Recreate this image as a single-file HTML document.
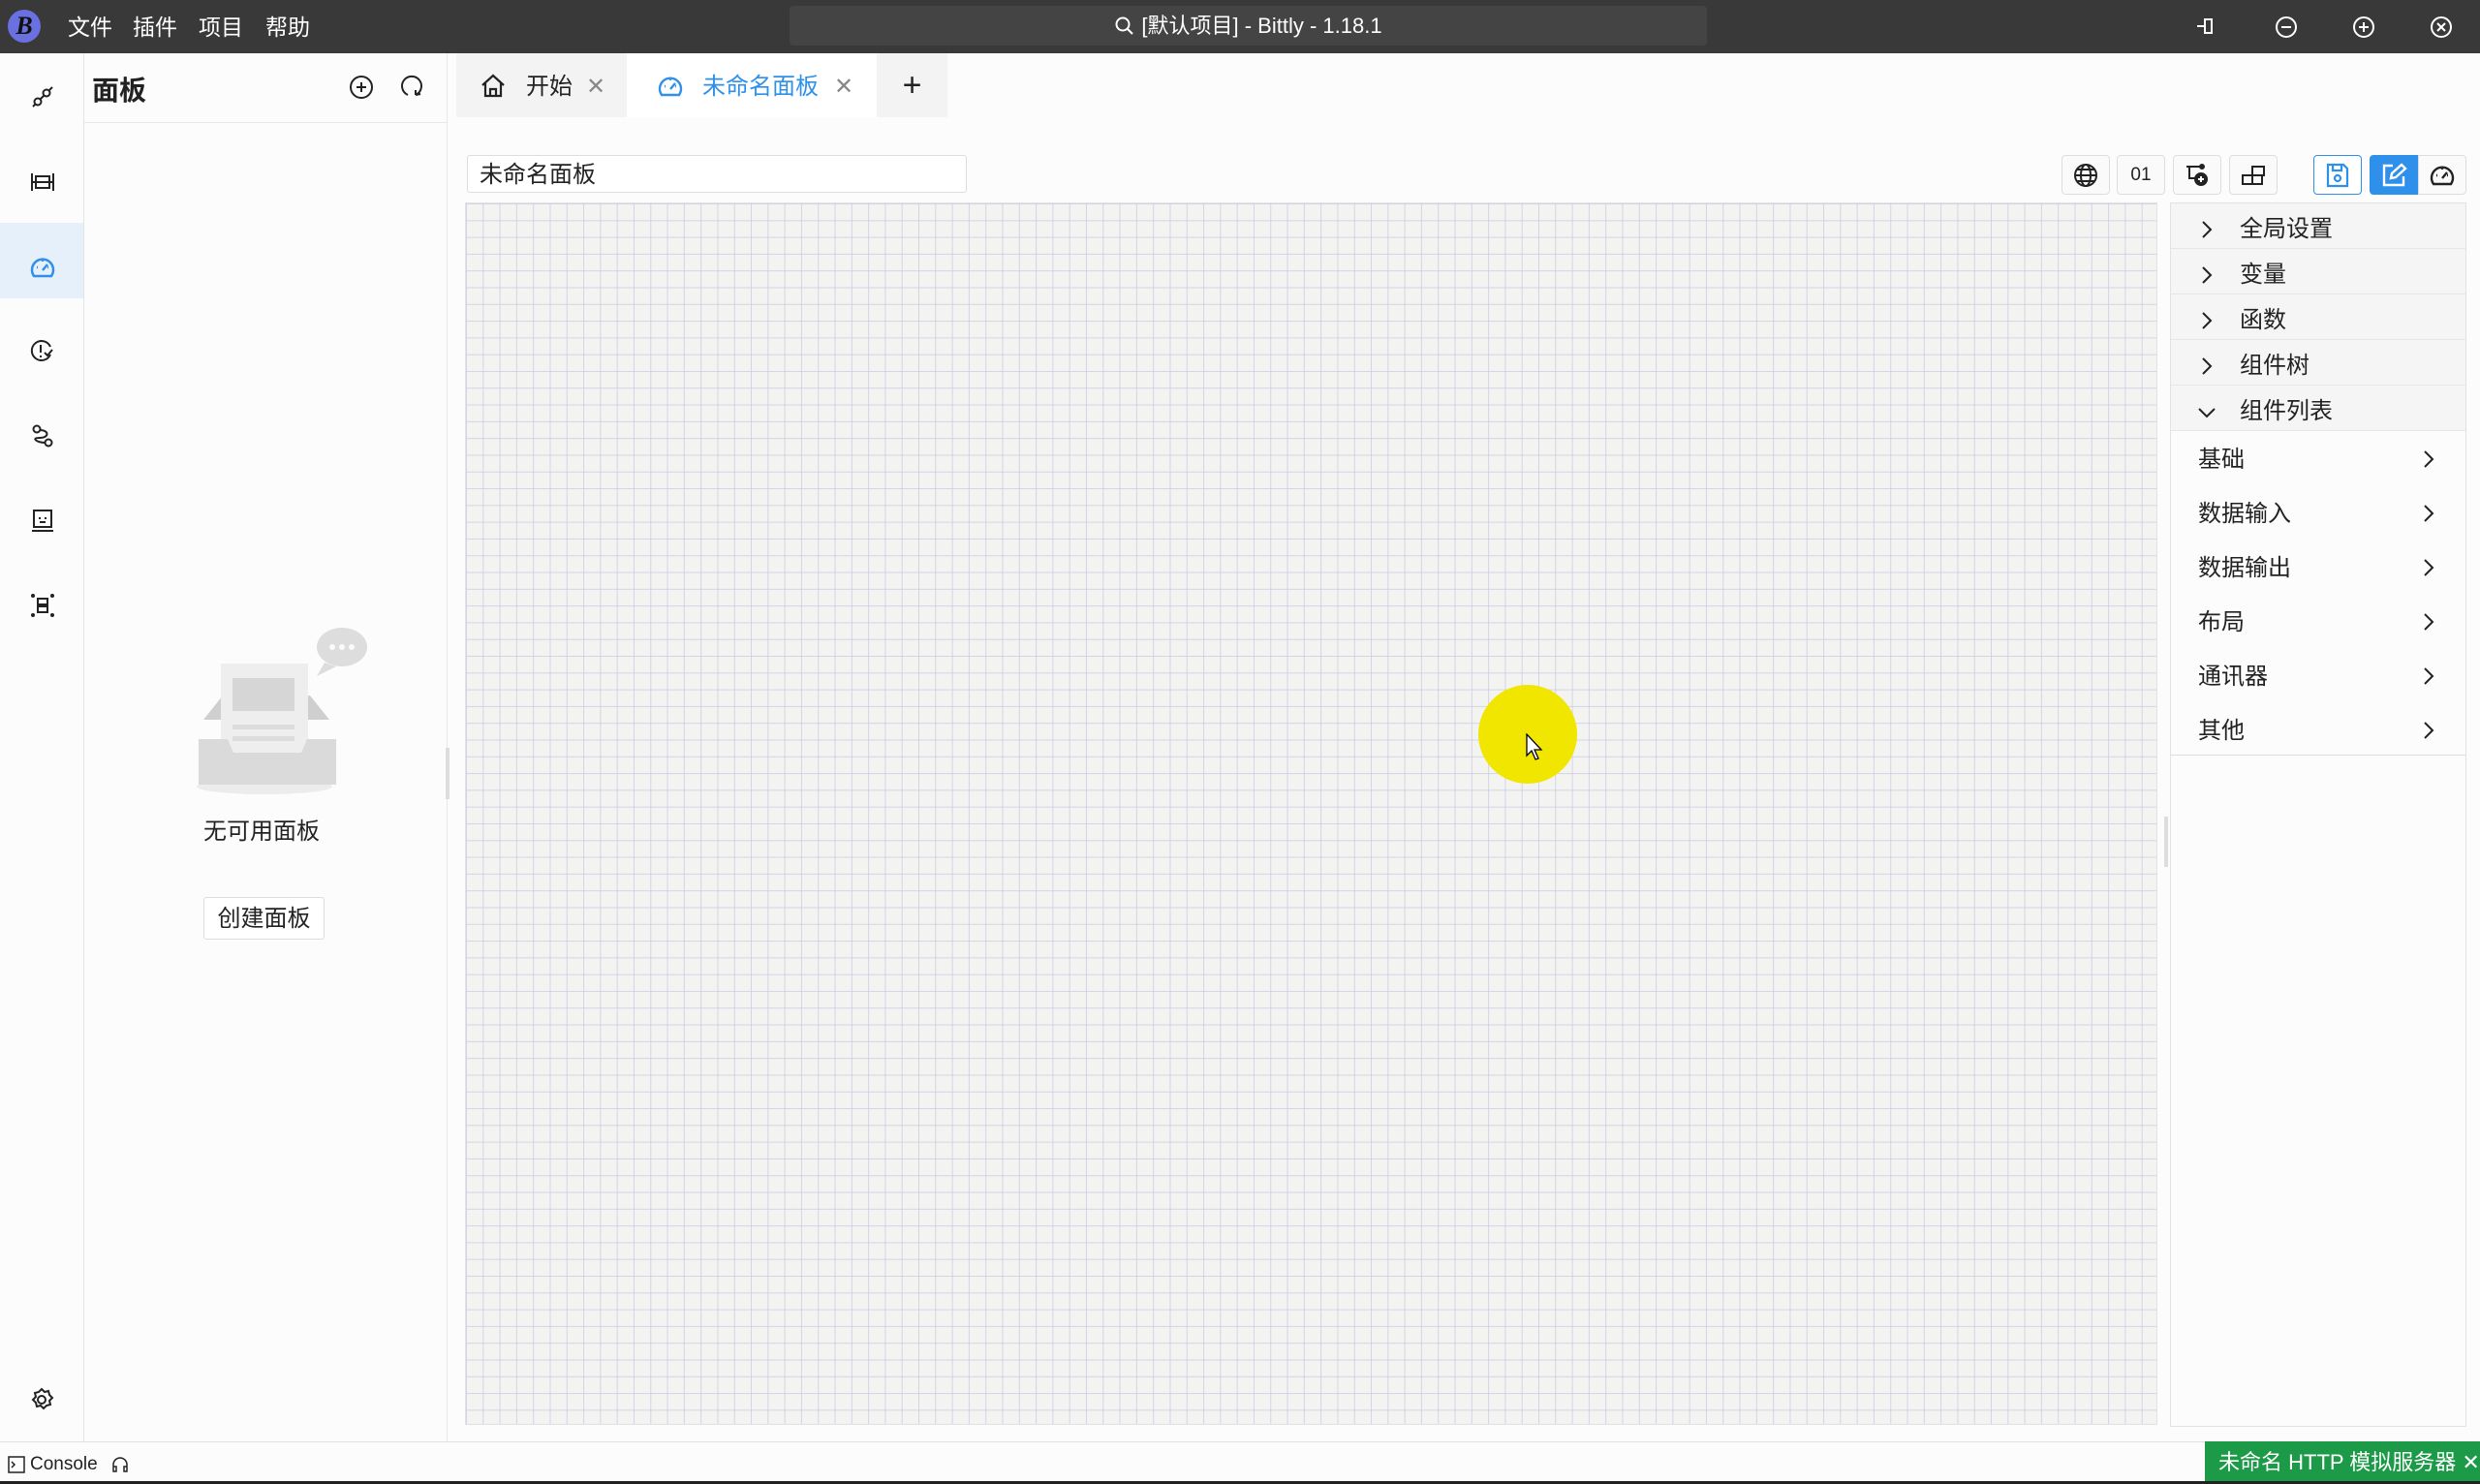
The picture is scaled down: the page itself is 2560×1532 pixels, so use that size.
<!DOCTYPE html>
<html><head><meta charset="utf-8"><style>
*{box-sizing:border-box;margin:0;padding:0}
body{width:2560px;height:1532px;overflow:hidden;background:#fcfcfc;font-family:"Liberation Sans","Noto Sans CJK SC",sans-serif;color:#222;position:relative}
.abs{position:absolute}
.title{left:0;top:0;width:2560px;height:55px;background:#393939}
.menu{top:9px;font-size:23px;color:#fff}
.search{left:815px;top:6px;width:947px;height:41px;background:#444;border-radius:4px;color:#fff;font-size:22px;text-align:center;line-height:41px}
.act{left:0;top:55px;width:87px;height:1433px;background:#fcfcfc;border-right:1px solid #e4e4e4}
.side{left:87px;top:55px;width:375px;height:1433px;background:#fcfcfc;border-right:1px solid #e8e8e8}
.tabbar{left:462px;top:55px;width:2098px;height:66px;background:#fcfcfc}
.tab{top:55px;height:66px;background:#f3f3f3;font-size:24px;line-height:66px}
.canvas{left:480px;top:209px;width:1747px;height:1262px;background-color:#f3f3f1;background-image:linear-gradient(to right,rgba(200,202,225,.75) 1px,transparent 1px),linear-gradient(to bottom,rgba(200,202,225,.75) 1px,transparent 1px);background-size:17.3px 17.3px;border:1px solid #e2e2e2}
.tb{top:160px;width:50px;height:41px;border:1px solid #ddd;border-radius:4px;background:#fafafa;display:flex;align-items:center;justify-content:center;font-size:19px}
.rp{left:2240px;top:209px;width:306px;height:1264px;border:1px solid #e2e2e2;background:#fcfcfc}
.ah{position:absolute;left:0;width:304px;height:47px;background:#f5f5f5;border-bottom:1px solid #e6e6e6;font-size:24px;line-height:46px;padding-left:71px;padding-top:4px}
.ah svg{position:absolute;left:30px;top:17px}
.li{position:absolute;left:28px;width:245px;font-size:24px;height:40px;line-height:40px}
.li svg{position:absolute;right:0;top:9px}
.status{left:0;top:1488px;width:2560px;height:41px;background:#fcfcfc;border-top:1px solid #e0e0e0}
</style></head><body>
<div class="abs title"></div>
<div class="abs" style="left:8px;top:10px;width:34px;height:34px;border-radius:50%;background:#6b70e0;color:#111;font:italic bold 26px 'Liberation Serif',serif;text-align:center;line-height:34px">B</div>
<div class="abs menu" style="left:70px">文件</div>
<div class="abs menu" style="left:137px">插件</div>
<div class="abs menu" style="left:205px">项目</div>
<div class="abs menu" style="left:274px">帮助</div>
<div class="abs search"><svg width="22" height="22" viewBox="0 0 22 22" style="vertical-align:-4px;margin-right:6px"><circle cx="9" cy="9" r="6.5" stroke="#fff" stroke-width="2" fill="none"/><path d="M14 14l5 5" stroke="#fff" stroke-width="2"/></svg>[默认项目] - Bittly - 1.18.1</div>
<svg class="abs" style="left:2266px;top:16px" width="24" height="22" viewBox="0 0 24 22"><path d="M2 11h8M10 4h7v14h-7z" stroke="#fff" stroke-width="2" fill="none"/></svg>
<svg class="abs" style="left:2347px;top:15px" width="26" height="26"><circle cx="13" cy="13" r="10" stroke="#fff" stroke-width="2" fill="none"/><path d="M8 13h10" stroke="#fff" stroke-width="2"/></svg>
<svg class="abs" style="left:2427px;top:15px" width="26" height="26"><circle cx="13" cy="13" r="10" stroke="#fff" stroke-width="2" fill="none"/><path d="M8 13h10M13 8v10" stroke="#fff" stroke-width="2"/></svg>
<svg class="abs" style="left:2507px;top:15px" width="26" height="26"><circle cx="13" cy="13" r="10" stroke="#fff" stroke-width="2" fill="none"/><path d="M9 9l8 8M17 9l-8 8" stroke="#fff" stroke-width="2"/></svg>

<div class="abs act"></div>
<div class="abs" style="left:0;top:230px;width:86px;height:78px;background:#e6f0fb"></div>
<svg class="abs" style="left:32px;top:88px" width="24" height="24" viewBox="0 0 24 24" fill="none" stroke="#222" stroke-width="2"><circle cx="7" cy="17" r="3.5"/><circle cx="16" cy="8" r="3.5"/><path d="M9.5 14.5l4-4M2 22l3-3M19 5l3-3"/></svg>
<svg class="abs" style="left:31px;top:177px" width="26" height="22" viewBox="0 0 26 22" fill="none" stroke="#222" stroke-width="2"><path d="M2 2v18M24 2v18M2 11h22M6 5h14v12H6z"/></svg>
<svg class="abs" style="left:30px;top:262px" width="28" height="28" viewBox="0 0 28 28" fill="none" stroke="#2e90ea" stroke-width="2.5"><path d="M5 23a11 11 0 1 1 18 0z"/><path d="M14 17l5-6M8 14h1M14 7v1M20 14h-1"/></svg>
<svg class="abs" style="left:30px;top:349px" width="26" height="26" viewBox="0 0 26 26" fill="none" stroke="#222" stroke-width="2"><path d="M22 9A10 10 0 1 0 22 17"/><path d="M12 7v8M12 18v2M16 15l3 3 5-6"/></svg>
<svg class="abs" style="left:32px;top:437px" width="24" height="26" viewBox="0 0 24 26" fill="none" stroke="#222" stroke-width="2"><circle cx="6" cy="6" r="3.5"/><circle cx="18" cy="20" r="3.5"/><path d="M9 7c10 0 10 8 0 8s-2 5 5 5"/></svg>
<svg class="abs" style="left:31px;top:524px" width="26" height="26" viewBox="0 0 26 26" fill="none" stroke="#222" stroke-width="2"><path d="M4 3h18v17H4zM2 24h22M9 11h2M15 11h2M10 15h6"/></svg>
<svg class="abs" style="left:31px;top:612px" width="26" height="26" viewBox="0 0 26 26" fill="none" stroke="#222" stroke-width="2"><path d="M8 6h10v6H8zM8 14h10v6H8z"/><circle cx="3" cy="3" r="1" fill="#222"/><circle cx="23" cy="3" r="1" fill="#222"/><circle cx="3" cy="23" r="1" fill="#222"/><circle cx="23" cy="23" r="1" fill="#222"/></svg>
<svg class="abs" style="left:30px;top:1432px" width="26" height="26" viewBox="0 0 26 26" fill="none" stroke="#222" stroke-width="2"><circle cx="13" cy="13" r="4"/><path d="M13 2l3 3 4-1 1 4 3 3-3 3 1 4-4 1-3 3-3-3-4 1-1-4-3-3 3-3-1-4 4-1z"/></svg>

<div class="abs side"></div>
<div class="abs" style="left:87px;top:126px;width:375px;border-top:1px solid #e6e6e6"></div>
<div class="abs" style="left:95px;top:72px;font-size:28px;font-weight:bold">面板</div>
<svg class="abs" style="left:359px;top:76px" width="28" height="28"><circle cx="14" cy="14" r="11" stroke="#222" stroke-width="2" fill="none"/><path d="M9 14h10M14 9v10" stroke="#222" stroke-width="2"/></svg>
<svg class="abs" style="left:411px;top:76px" width="28" height="28"><path d="M10 22A10 10 0 1 1 18 22M18 22l0-5M18 22l5-1" stroke="#222" stroke-width="2" fill="none"/></svg>
<div class="abs" style="left:460px;top:772px;width:4px;height:53px;background:#ddd"></div>
<svg class="abs" style="left:195px;top:640px" width="190" height="180" viewBox="0 0 190 180">
<ellipse cx="158" cy="28" rx="26" ry="20" fill="#ddd"/><path d="M140 44l-8 14 20-10z" fill="#ddd"/><circle cx="148" cy="28" r="3" fill="#fafafa"/><circle cx="158" cy="28" r="3" fill="#fafafa"/><circle cx="168" cy="28" r="3" fill="#fafafa"/>
<ellipse cx="78" cy="172" rx="70" ry="8" fill="#ececec"/>
<path d="M15 103l20-25h90l20 25z" fill="#cfcfcf"/>
<rect x="33" y="45" width="90" height="108" fill="#eeeeee"/>
<rect x="45" y="60" width="64" height="34" fill="#d6d6d6"/><rect x="45" y="108" width="64" height="5" fill="#dcdcdc"/><rect x="45" y="120" width="64" height="5" fill="#dcdcdc"/>
<path d="M10 123h30l6 14h70l6-14h30v47H10z" fill="#dadada"/>
</svg>
<div class="abs" style="left:210px;top:838px;font-size:24px">无可用面板</div>
<div class="abs" style="left:210px;top:926px;width:125px;height:44px;border:1px solid #ddd;border-radius:3px;font-size:24px;text-align:center;line-height:44px;background:#fff">创建面板</div>

<div class="abs tabbar"></div>
<div class="abs tab" style="left:471px;width:176px"><svg width="28" height="28" viewBox="0 0 28 28" style="position:absolute;left:24px;top:20px" fill="none" stroke="#222" stroke-width="2.2"><path d="M3 13L14 3l11 10M6 11v13h16V11M11 24v-7h6v7"/></svg><span style="position:absolute;left:72px;top:2px">开始</span><span style="position:absolute;left:134px;top:2px;color:#888">✕</span></div>
<div class="abs tab" style="left:647px;width:258px;background:#fff;color:#2e90ea"><svg width="28" height="28" viewBox="0 0 28 28" style="position:absolute;left:31px;top:20px" fill="none" stroke="#2e90ea" stroke-width="2.4"><path d="M5 23a11 11 0 1 1 18 0z"/><path d="M14 17l5-6M8 14h1M14 7v1M20 14h-1"/></svg><span style="position:absolute;left:78px;top:2px">未命名面板</span><span style="position:absolute;left:214px;top:2px;color:#888">✕</span></div>
<div class="abs tab" style="left:905px;width:73px;text-align:center;font-size:34px;line-height:66px">+</div>

<div class="abs" style="left:482px;top:160px;width:516px;height:39px;border:1px solid #ddd;border-radius:3px;background:#fff;font-size:24px;line-height:40px;padding-left:12px">未命名面板</div>
<div class="abs tb" style="left:2128px"><svg width="28" height="28" viewBox="0 0 28 28" fill="none" stroke="#222" stroke-width="2"><circle cx="14" cy="14" r="11"/><ellipse cx="14" cy="14" rx="5" ry="11"/><path d="M3 14h22M5 8h18M5 20h18"/></svg></div>
<div class="abs tb" style="left:2185px">01</div>
<div class="abs tb" style="left:2243px"><svg width="28" height="28" viewBox="0 0 28 28" fill="none" stroke="#222" stroke-width="2"><path d="M3 5h14M6 5v12h6"/><circle cx="19" cy="5" r="2" fill="#222"/><circle cx="18" cy="18" r="6" fill="#222"/><path d="M15 18h6M18 15v6" stroke="#fff"/></svg></div>
<div class="abs tb" style="left:2301px"><svg width="28" height="24" viewBox="0 0 28 24" fill="none" stroke="#222" stroke-width="2"><path d="M3 12h10v9H3zM13 12h10v9H13zM13 3h12v9H13z"/></svg></div>
<div class="abs tb" style="left:2388px;border-color:#2e90ea;background:#fff"><svg width="26" height="28" viewBox="0 0 26 28" fill="none" stroke="#2e90ea" stroke-width="2.2"><path d="M3 3h16l4 4v18H3zM8 3v6h9V3"/><circle cx="13" cy="17" r="3"/></svg></div>
<div class="abs tb" style="left:2446px;background:#2e90ea;border-color:#2e90ea;border-radius:4px 0 0 4px"><svg width="28" height="28" viewBox="0 0 28 28" fill="none" stroke="#fff" stroke-width="2.4"><path d="M13 4H4v20h20v-9"/><path d="M11 17l1-5 10-9 4 4-10 9z"/></svg></div>
<div class="abs tb" style="left:2496px;border-radius:0 4px 4px 0"><svg width="28" height="28" viewBox="0 0 28 28" fill="none" stroke="#222" stroke-width="2.4"><path d="M5 23a11 11 0 1 1 18 0z"/><path d="M14 17l5-6M8 14h1M14 7v1M20 14h-1"/></svg></div>

<div class="abs canvas"></div>
<div class="abs" style="left:1526px;top:707px;width:102px;height:102px;border-radius:50%;background:#f0e600"></div>
<svg class="abs" style="left:1575px;top:757px" width="20" height="30" viewBox="0 0 20 30"><path d="M1 1v22l5-5 4 9 3-1-4-9h7z" fill="#fff" stroke="#000" stroke-width="1.3"/></svg>
<div class="abs" style="left:2234px;top:843px;width:4px;height:52px;background:#ddd"></div>

<div class="abs rp">
<div class="ah" style="top:0"><svg width="14" height="20"><path d="M3 2l8 8-8 8" stroke="#222" stroke-width="2" fill="none"/></svg>全局设置</div>
<div class="ah" style="top:47px"><svg width="14" height="20"><path d="M3 2l8 8-8 8" stroke="#222" stroke-width="2" fill="none"/></svg>变量</div>
<div class="ah" style="top:94px"><svg width="14" height="20"><path d="M3 2l8 8-8 8" stroke="#222" stroke-width="2" fill="none"/></svg>函数</div>
<div class="ah" style="top:141px"><svg width="14" height="20"><path d="M3 2l8 8-8 8" stroke="#222" stroke-width="2" fill="none"/></svg>组件树</div>
<div class="ah" style="top:188px"><svg width="20" height="20" style="left:27px;top:19px"><path d="M2 5l8 8 8-8" stroke="#222" stroke-width="2" fill="none"/></svg>组件列表</div>
<div style="position:absolute;left:0;top:235px;width:304px;height:335px;border-bottom:1px solid #ddd"></div>
<div class="li" style="top:245px">基础<svg width="14" height="20"><path d="M3 2l8 8-8 8" stroke="#222" stroke-width="2" fill="none"/></svg></div>
<div class="li" style="top:301px">数据输入<svg width="14" height="20"><path d="M3 2l8 8-8 8" stroke="#222" stroke-width="2" fill="none"/></svg></div>
<div class="li" style="top:357px">数据输出<svg width="14" height="20"><path d="M3 2l8 8-8 8" stroke="#222" stroke-width="2" fill="none"/></svg></div>
<div class="li" style="top:413px">布局<svg width="14" height="20"><path d="M3 2l8 8-8 8" stroke="#222" stroke-width="2" fill="none"/></svg></div>
<div class="li" style="top:469px">通讯器<svg width="14" height="20"><path d="M3 2l8 8-8 8" stroke="#222" stroke-width="2" fill="none"/></svg></div>
<div class="li" style="top:525px">其他<svg width="14" height="20"><path d="M3 2l8 8-8 8" stroke="#222" stroke-width="2" fill="none"/></svg></div>
</div>

<div class="abs status"></div>
<div class="abs" style="left:8px;top:1501px;font-size:19px;display:flex;align-items:center;gap:5px"><svg width="18" height="18"><rect x="1" y="1" width="16" height="16" stroke="#222" fill="none" stroke-width="1.5"/><path d="M4 6l3 3-3 3" stroke="#222" fill="none" stroke-width="1.5"/></svg>Console <svg width="20" height="18" style="margin-left:8px"><path d="M3 15v-6a7 7 0 0 1 14 0v6M3 11h3v5H3zM14 11h3v5h-3z" stroke="#222" fill="none" stroke-width="1.5"/></svg></div>
<div class="abs" style="left:2276px;top:1488px;width:284px;height:41px;background:#1d9a48;color:#fff;font-size:22px;line-height:43px;padding-left:14px;white-space:nowrap">未命名 HTTP 模拟服务器 ✕</div>
<div class="abs" style="left:0;top:1529px;width:2560px;height:3px;background:#222"></div>
</body></html>
